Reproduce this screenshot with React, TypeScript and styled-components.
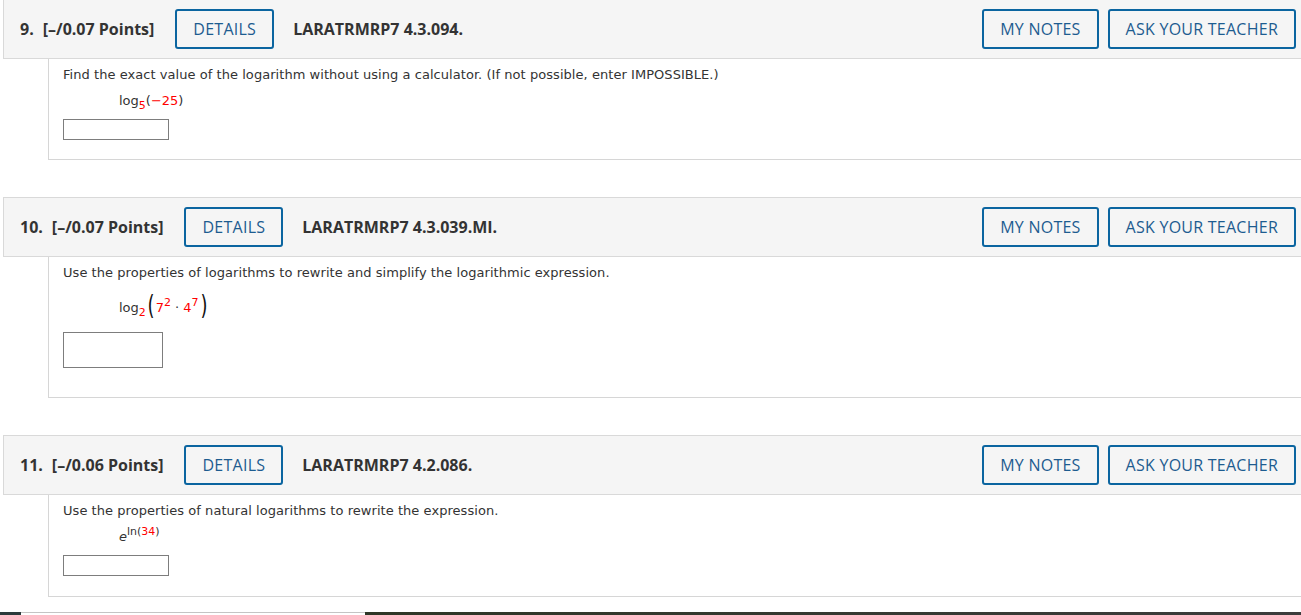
import React from 'react'
import styled, {createGlobalStyle} from 'styled-components'

const GlobalStyle = createGlobalStyle`
  html, body {
    margin: 0;
    padding: 0;
    background: #fff;
    overflow: hidden;
  }
  * {
    box-sizing: border-box;
  }
`

const Page = styled.div`
  width: 1315px;
  padding-left: 3px;
  margin-top: -1px;
`

const Question = styled.section`
  & + & {
    margin-top: 37px;
  }
`

const Header = styled.div`
  display: flex;
  align-items: center;
  height: 60px;
  padding: 0 18px 0 16px;
  background: #f5f5f5;
  border: 1px solid #d9d9d9;
  font-family: 'Open Sans', 'Liberation Sans', sans-serif;
  color: #333;
`

const Num = styled.span`
  font-size: 16px;
  font-weight: 700;
  margin-right: 9px;
`

const Points = styled.span`
  font-size: 16px;
  font-weight: 700;
  margin-right: 21px;
`

const Code = styled.span`
  font-size: 16px;
  font-weight: 700;
  margin-left: 19px;
`

const Spacer = styled.div`
  flex: 1;
`

const OutlineButton = styled.button`
  height: 40px;
  padding: 0 16px;
  background: transparent;
  border: 2px solid #0b65a0;
  border-radius: 3px;
  font-family: 'Open Sans', 'Liberation Sans', sans-serif;
  font-size: 16px;
  font-weight: 500;
  letter-spacing: 0.25px;
  color: #1d5c90;
  cursor: pointer;

  & + & {
    margin-left: 9px;
  }
`

const Body = styled.div<{$pb: number}>`
  margin-left: 45px;
  padding: 7px 14px ${p => p.$pb}px;
  border: 1px solid #d6d6d6;
  border-top: none;
  font-family: 'DejaVu Sans', Verdana, sans-serif;
  font-size: 13px;
  color: #333;
`

const Prompt = styled.div`
  line-height: 18px;
  letter-spacing: 0.05px;
`

const MathLine = styled.div<{$h: number}>`
  display: flex;
  align-items: center;
  height: ${p => p.$h}px;
  margin: 7px 0 0 56px;
  line-height: 20px;
  white-space: nowrap;
`

const Red = styled.span`
  color: #f00;
`

const Sub = styled.sub`
  font-size: 11px;
  color: #f00;
  vertical-align: -4px;
  line-height: 0;
`

const Sup = styled.sup<{$red?: boolean}>`
  font-size: 11px;
  color: ${p => (p.$red ? '#f00' : '#333')};
  vertical-align: 6px;
  line-height: 0;
`

const BigParen = styled.span`
  display: inline-block;
  font-size: 20px;
  color: #111;
  transform: scale(0.9, 1.35);
  margin: 0 1px;
`

const Italic = styled.span`
  font-style: italic;
`

const AnswerBox = styled.input<{$w: number; $h: number}>`
  display: block;
  width: ${p => p.$w}px;
  height: ${p => p.$h}px;
  margin-top: 8px;
  border: 1px solid #7d7d7d;
  background: #fff;
  padding: 0 4px;
  font-family: 'DejaVu Sans', sans-serif;
  font-size: 13px;
`

const Footer = styled.div`
  display: flex;
  height: 3px;
  margin-top: 15px;
  width: 1301px;
  margin-left: -3px;
`

const FooterPart = styled.div<{$w?: number; $bg: string; $line?: boolean}>`
  ${p => (p.$w ? `width: ${p.$w}px;` : 'flex: 1;')}
  background: ${p => p.$bg};
  ${p => (p.$line ? 'border-top: 1px solid #c4c4c4;' : '')}
`

type QuestionProps = {
  num: string
  points: string
  code: string
  prompt: string
  math: React.ReactNode
  mathHeight: number
  box: {w: number; h: number}
  pb: number
}

function QuestionBlock({num, points, code, prompt, math, mathHeight, box, pb}: QuestionProps) {
  return (
    <Question>
      <Header>
        <Num>{num}</Num>
        <Points>{points}</Points>
        <OutlineButton>DETAILS</OutlineButton>
        <Code>{code}</Code>
        <Spacer />
        <OutlineButton>MY NOTES</OutlineButton>
        <OutlineButton>ASK YOUR TEACHER</OutlineButton>
      </Header>
      <Body $pb={pb}>
        <Prompt>{prompt}</Prompt>
        <MathLine $h={mathHeight}>{math}</MathLine>
        <AnswerBox type="text" $w={box.w} $h={box.h} />
      </Body>
    </Question>
  )
}

export default function App() {
  return (
    <>
      <GlobalStyle />
      <Page>
        <QuestionBlock
          num="9."
          points="[–/0.07 Points]"
          code="LARATRMRP7 4.3.094."
          prompt="Find the exact value of the logarithm without using a calculator. (If not possible, enter IMPOSSIBLE.)"
          mathHeight={20}
          box={{w: 106, h: 21}}
          pb={19}
          math={
            <span>
              log<Sub>5</Sub>(<Red>−25</Red>)
            </span>
          }
        />
        <QuestionBlock
          num="10."
          points="[–/0.07 Points]"
          code="LARATRMRP7 4.3.039.MI."
          prompt="Use the properties of logarithms to rewrite and simplify the logarithmic expression."
          mathHeight={35}
          box={{w: 100, h: 36}}
          pb={29}
          math={
            <span>
              log<Sub>2</Sub>
              <BigParen>(</BigParen>
              <Red>7</Red>
              <Sup $red>2</Sup> · <Red>4</Red>
              <Sup $red>7</Sup>
              <BigParen>)</BigParen>
            </span>
          }
        />
        <QuestionBlock
          num="11."
          points="[–/0.06 Points]"
          code="LARATRMRP7 4.2.086."
          prompt="Use the properties of natural logarithms to rewrite the expression."
          mathHeight={20}
          box={{w: 106, h: 21}}
          pb={20}
          math={
            <span>
              <Italic>e</Italic>
              <Sup>
                ln(<Red>34</Red>)
              </Sup>
            </span>
          }
        />
        <Footer>
          <FooterPart $w={21} $bg="#2c3a3b" />
          <FooterPart $w={344} $bg="#fff" $line />
          <FooterPart $bg="linear-gradient(90deg, #2e3626, #3c3c3c)" />
        </Footer>
      </Page>
    </>
  )
}
